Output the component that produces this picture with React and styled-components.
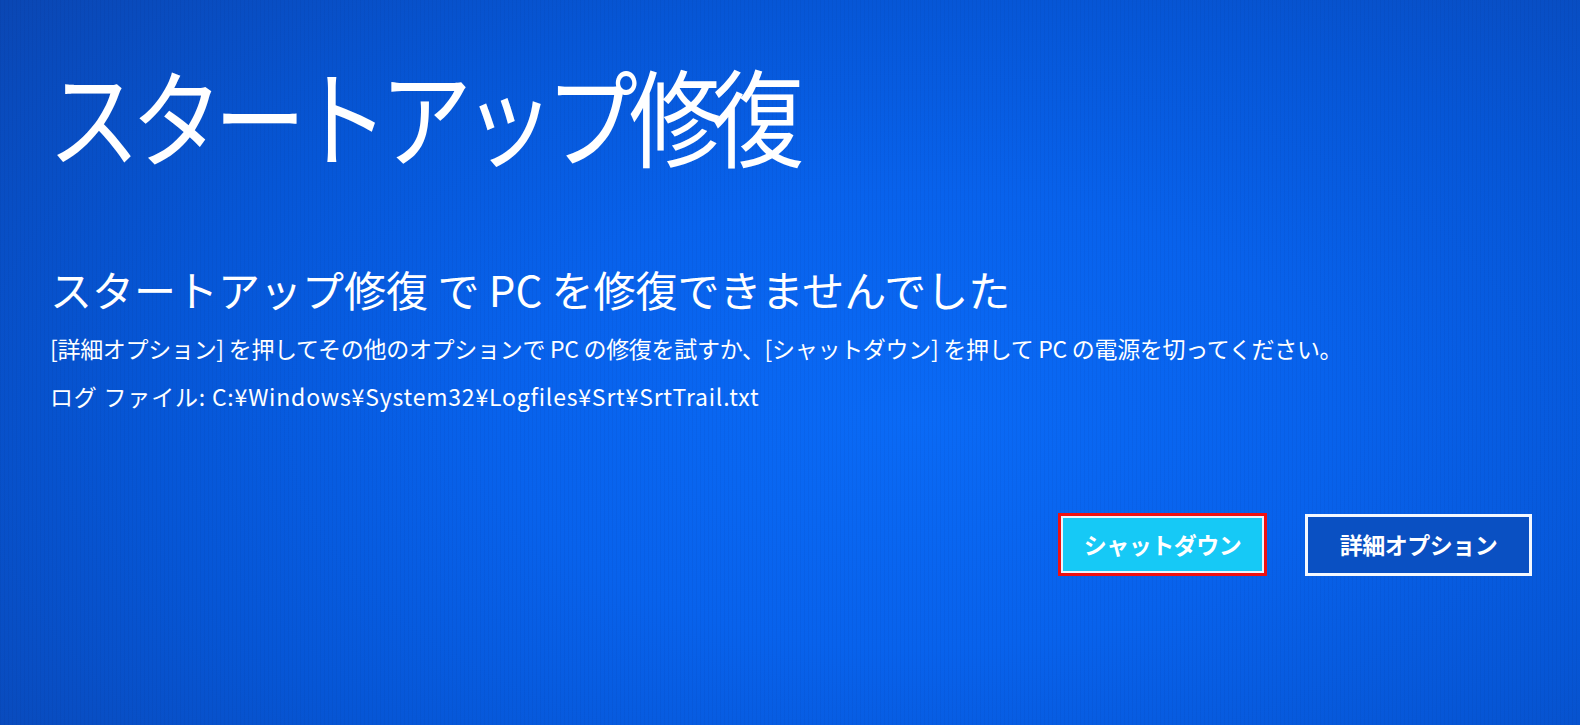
import styled, { createGlobalStyle } from "styled-components";

const GlobalStyle = createGlobalStyle`
  html, body {
    margin: 0;
    padding: 0;
    height: 100%;
    overflow: hidden;
  }
  #root {
    height: 100%;
  }
`;

const Screen = styled.div`
  width: 1580px;
  height: 725px;
  box-sizing: border-box;
  padding: 60px 48px 0 48px;
  display: flex;
  flex-direction: column;
  color: #ffffff;
  font-family: "Noto Sans CJK JP", "Noto Sans", sans-serif;
  background:
    repeating-linear-gradient(90deg, rgba(0, 0, 40, 0.04) 0 1px, transparent 1px 4px),
    radial-gradient(ellipse 75% 90% at 58% 58%, #0a6af6 0%, #0862ec 35%, #0656d6 65%, #0a47b4 100%);
`;

const Title = styled.h1`
  margin: 0;
  font-size: 92px;
  font-weight: 400;
  line-height: 1;
  letter-spacing: -9px;
  transform: scaleY(1.15);
  transform-origin: left top;
`;

const Heading = styled.h2`
  margin: 116px 0 0 2px;
  font-size: 42px;
  font-weight: 400;
  line-height: 1;
  letter-spacing: 0;
`;

const Line = styled.p`
  margin: ${({ $top }) => $top}px 0 0 2px;
  font-size: 23px;
  line-height: 1;
  letter-spacing: ${({ $spacing }) => $spacing}px;
`;

const Buttons = styled.div`
  display: flex;
  justify-content: flex-end;
  align-items: center;
  gap: 38px;
  margin-top: 105px;
`;

const Marked = styled.div`
  border: 3px solid #f01010;
  padding: 2px;
  background: #e8f4ff;
`;

const Button = styled.button`
  box-sizing: border-box;
  width: ${({ $w }) => $w}px;
  height: ${({ $h }) => $h}px;
  border: ${({ $primary }) => ($primary ? "none" : "3px solid #f4f8ff")};
  background: ${({ $primary }) => ($primary ? "#16c9f6" : "#0a50c2")};
  color: #ffffff;
  font-family: "Noto Sans CJK JP", "Noto Sans", sans-serif;
  font-size: 23px;
  font-weight: 700;
  letter-spacing: -0.5px;
  display: flex;
  align-items: center;
  justify-content: center;
  padding: 0 0 2px;
`;

export default function App() {
  return (
    <>
      <GlobalStyle />
      <Screen>
        <Title>スタートアップ修復</Title>
        <Heading>スタートアップ修復 で PC を修復できませんでした</Heading>
        <Line $top={27} $spacing={-0.3}>
          [詳細オプション] を押してその他のオプションで PC の修復を試すか、[シャットダウン] を押して PC の電源を切ってください。
        </Line>
        <Line $top={25} $spacing={0.8}>ログ ファイル: C:¥Windows¥System32¥Logfiles¥Srt¥SrtTrail.txt</Line>
        <Buttons>
          <Marked>
            <Button $primary $w={199} $h={53}>シャットダウン</Button>
          </Marked>
          <Button $w={227} $h={62}>詳細オプション</Button>
        </Buttons>
      </Screen>
    </>
  );
}
